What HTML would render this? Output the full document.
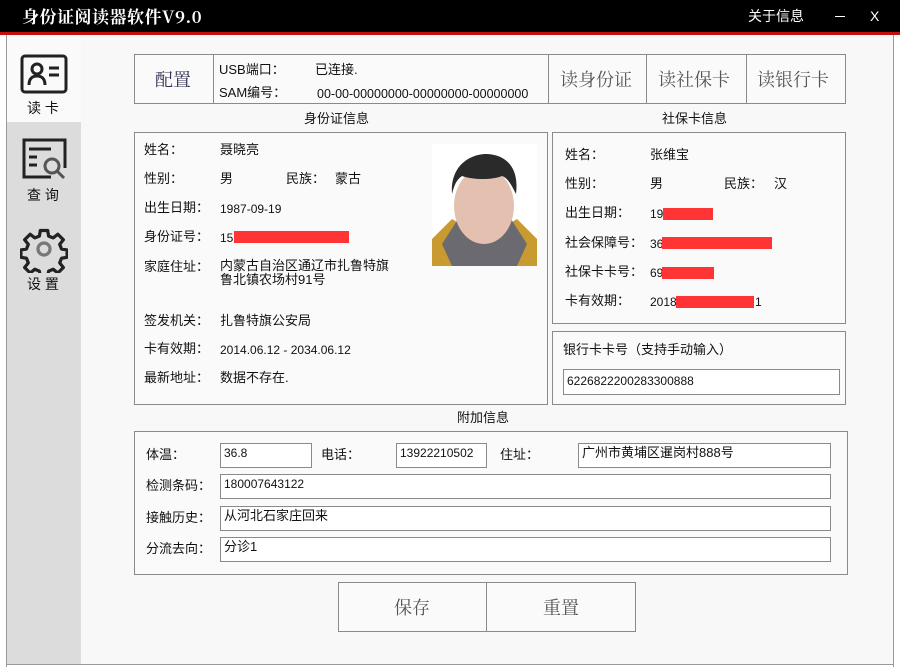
<!DOCTYPE html>
<html><head><meta charset="utf-8"><style>
*{margin:0;padding:0;box-sizing:border-box}
body{width:900px;height:667px;background:#fff;position:relative;overflow:hidden;font-family:"Liberation Sans","Noto Sans CJK SC",sans-serif;color:#111}
.a{position:absolute}
.box{position:absolute;border:1px solid #8a8a8a;background:#fafafa}
.t{position:absolute;font-size:13px;white-space:nowrap;line-height:16px}
.inp{position:absolute;border:1px solid #8a8a8a;background:#fff;font-size:13px;padding:1px 3px;line-height:16px;white-space:nowrap}
.serif{font-family:"Noto Serif CJK SC","Liberation Serif",serif;color:#555;font-size:18px}
.red{position:absolute;background:#ff3434;height:12px}
</style></head><body>
<div class="a" style="left:0;top:0;width:900px;height:32px;background:#000"></div>
<div class="a" style="left:0;top:32px;width:900px;height:3px;background:#c01010"></div>
<div class="t" style="left:22px;top:6px;color:#fff;font-size:17px;font-weight:bold;font-family:'Noto Serif CJK SC','Liberation Serif',serif;line-height:20px;letter-spacing:0.5px">身份证阅读器软件V9.0</div>
<div class="t" style="left:748px;top:8px;color:#fff;font-size:14px">关于信息</div>
<div class="a" style="left:835px;top:16px;width:10px;height:1px;background:#fff"></div>
<div class="t" style="left:870px;top:8px;color:#fff;font-size:14px">X</div>
<div class="a" style="left:6px;top:35px;width:1px;height:632px;background:#999"></div>
<div class="a" style="left:893px;top:35px;width:1px;height:632px;background:#999"></div>
<div class="a" style="left:81px;top:35px;width:812px;height:629px;background:#f8f8f8"></div>
<div class="a" style="left:6px;top:664px;width:888px;height:1px;background:#999"></div>
<div class="a" style="left:7px;top:35px;width:74px;height:87px;background:#fafafa"></div>
<div class="a" style="left:7px;top:122px;width:74px;height:542px;background:#dcdcdc"></div>
<svg class="a" style="left:20px;top:54px" width="48" height="40" viewBox="0 0 48 40"><rect x="2" y="2" width="44" height="36" rx="3" fill="none" stroke="#222" stroke-width="3"/><circle cx="17" cy="15" r="5" fill="none" stroke="#222" stroke-width="3"/><path d="M9 31c0-7 4-9 8-9s8 2 8 9" fill="none" stroke="#222" stroke-width="3"/><path d="M29 14h10M29 21h10" stroke="#222" stroke-width="3"/></svg>
<div class="t" style="left:27px;top:100px;font-size:14px">读 卡</div>
<svg class="a" style="left:21px;top:137px" width="48" height="48" viewBox="0 0 48 48"><path d="M30 40H3V3h41v28" fill="none" stroke="#222" stroke-width="3"/><path d="M8 12h22M8 20h8M8 28h8" stroke="#222" stroke-width="3"/><circle cx="31" cy="29" r="7" fill="none" stroke="#555" stroke-width="3"/><path d="M36 34l7 7" stroke="#555" stroke-width="3"/></svg>
<div class="t" style="left:27px;top:187px;font-size:14px">查 询</div>
<svg class="a" style="left:20px;top:225px" width="48" height="48" viewBox="-3 -3 52 52"><path d="M19 3h8l1 6 5 2 5-4 6 6-4 5 2 5 6 1v8l-6 1-2 5 4 5-6 6-5-4-5 2-1 6h-8l-1-6-5-2-5 4-6-6 4-5-2-5-6-1v-8l6-1 2-5-4-5 6-6 5 4 5-2z" fill="none" stroke="#222" stroke-width="3.5" stroke-linejoin="round"/><circle cx="23" cy="23" r="6.5" fill="none" stroke="#777" stroke-width="3.5"/></svg>
<div class="t" style="left:27px;top:276px;font-size:14px">设 置</div>

<div class="box" style="left:134px;top:54px;width:712px;height:50px"></div>
<div class="a" style="left:213px;top:54px;width:1px;height:50px;background:#8a8a8a"></div>
<div class="a" style="left:548px;top:54px;width:1px;height:50px;background:#8a8a8a"></div>
<div class="a" style="left:646px;top:54px;width:1px;height:50px;background:#8a8a8a"></div>
<div class="a" style="left:746px;top:54px;width:1px;height:50px;background:#8a8a8a"></div>
<div class="t serif" style="left:155px;top:69px;line-height:20px;color:#335">配置</div>
<div class="t" style="left:219px;top:62px">USB端口：</div>
<div class="t" style="left:219px;top:85px">SAM编号：</div>
<div class="t" style="left:315px;top:62px">已连接.</div>
<div class="t" style="left:317px;top:86px;font-size:12.5px">00-00-00000000-00000000-00000000</div>
<div class="t serif" style="left:560px;top:69px;line-height:20px">读身份证</div>
<div class="t serif" style="left:658px;top:69px;line-height:20px">读社保卡</div>
<div class="t serif" style="left:757px;top:69px;line-height:20px">读银行卡</div>

<div class="t" style="left:304px;top:111px">身份证信息</div>
<div class="t" style="left:662px;top:111px">社保卡信息</div>
<div class="box" style="left:134px;top:132px;width:414px;height:273px"></div>
<div class="t" style="left:144px;top:142px">姓名：</div><div class="t" style="left:220px;top:142px">聂晓亮</div>
<div class="t" style="left:144px;top:171px">性别：</div><div class="t" style="left:220px;top:171px">男</div>
<div class="t" style="left:286px;top:171px">民族：</div><div class="t" style="left:335px;top:171px">蒙古</div>
<div class="t" style="left:144px;top:200px">出生日期：</div><div class="t" style="left:220px;top:201px;font-size:12px">1987-09-19</div>
<div class="t" style="left:144px;top:229px">身份证号：</div><div class="t" style="left:220px;top:230px;font-size:12px">15</div>
<div class="red" style="left:234px;top:231px;width:115px"></div>
<div class="t" style="left:144px;top:259px">家庭住址：</div>
<div class="t" style="left:220px;top:259px;line-height:14px">内蒙古自治区通辽市扎鲁特旗<br>鲁北镇农场村91号</div>
<div class="t" style="left:144px;top:313px">签发机关：</div><div class="t" style="left:220px;top:313px">扎鲁特旗公安局</div>
<div class="t" style="left:144px;top:341px">卡有效期：</div><div class="t" style="left:220px;top:342px;font-size:12px">2014.06.12 - 2034.06.12</div>
<div class="t" style="left:144px;top:370px">最新地址：</div><div class="t" style="left:220px;top:370px">数据不存在.</div>
<svg class="a" style="left:432px;top:144px" width="105" height="122" viewBox="0 0 105 122"><rect width="105" height="122" fill="#fff"/><path d="M0 95l20-20 20 12h25l20-12 20 20v27H0z" fill="#c99a30"/><path d="M10 100l18-28 12 18h25l12-18 18 28-10 22H20z" fill="#6a6a70"/><ellipse cx="52" cy="62" rx="30" ry="38" fill="#e4c0b0"/><path d="M20 50c-2-30 20-40 34-40s34 8 30 40c-4-8-8-16-14-18-10 4-28 4-40 0-6 4-8 10-10 18z" fill="#2a2a2a"/></svg>

<div class="box" style="left:552px;top:132px;width:294px;height:192px"></div>
<div class="t" style="left:565px;top:147px">姓名：</div><div class="t" style="left:650px;top:147px">张维宝</div>
<div class="t" style="left:565px;top:176px">性别：</div><div class="t" style="left:650px;top:176px">男</div>
<div class="t" style="left:724px;top:176px">民族：</div><div class="t" style="left:774px;top:176px">汉</div>
<div class="t" style="left:565px;top:205px">出生日期：</div><div class="t" style="left:650px;top:206px;font-size:12px">19</div>
<div class="red" style="left:663px;top:208px;width:50px"></div>
<div class="t" style="left:565px;top:235px">社会保障号：</div><div class="t" style="left:650px;top:236px;font-size:12px">36</div>
<div class="red" style="left:662px;top:237px;width:110px"></div>
<div class="t" style="left:565px;top:264px">社保卡卡号：</div><div class="t" style="left:650px;top:265px;font-size:12px">69</div>
<div class="red" style="left:662px;top:267px;width:52px"></div>
<div class="t" style="left:565px;top:293px">卡有效期：</div><div class="t" style="left:650px;top:294px;font-size:12px">2018</div>
<div class="red" style="left:676px;top:296px;width:78px"></div>
<div class="t" style="left:755px;top:294px;font-size:12px">1</div>
<div class="box" style="left:552px;top:331px;width:294px;height:74px"></div>
<div class="t" style="left:563px;top:342px">银行卡卡号（支持手动输入）</div>
<div class="inp" style="left:563px;top:369px;width:277px;height:26px;font-size:12px;padding-top:3px">6226822200283300888</div>

<div class="t" style="left:457px;top:410px">附加信息</div>
<div class="box" style="left:134px;top:431px;width:714px;height:144px"></div>
<div class="t" style="left:146px;top:447px">体温：</div>
<div class="inp" style="left:220px;top:443px;width:92px;height:25px;font-size:12px">36.8</div>
<div class="t" style="left:321px;top:447px">电话：</div>
<div class="inp" style="left:396px;top:443px;width:91px;height:25px;font-size:12px">13922210502</div>
<div class="t" style="left:500px;top:447px">住址：</div>
<div class="inp" style="left:578px;top:443px;width:253px;height:25px">广州市黄埔区暹岗村888号</div>
<div class="t" style="left:146px;top:478px">检测条码：</div>
<div class="inp" style="left:220px;top:474px;width:611px;height:25px;font-size:12px">180007643122</div>
<div class="t" style="left:146px;top:510px">接触历史：</div>
<div class="inp" style="left:220px;top:506px;width:611px;height:25px">从河北石家庄回来</div>
<div class="t" style="left:146px;top:541px">分流去向：</div>
<div class="inp" style="left:220px;top:537px;width:611px;height:25px">分诊1</div>

<div class="box" style="left:338px;top:582px;width:149px;height:50px"></div>
<div class="box" style="left:486px;top:582px;width:150px;height:50px"></div>
<div class="t serif" style="left:394px;top:597px;line-height:20px">保存</div>
<div class="t serif" style="left:543px;top:597px;line-height:20px">重置</div>
</body></html>
